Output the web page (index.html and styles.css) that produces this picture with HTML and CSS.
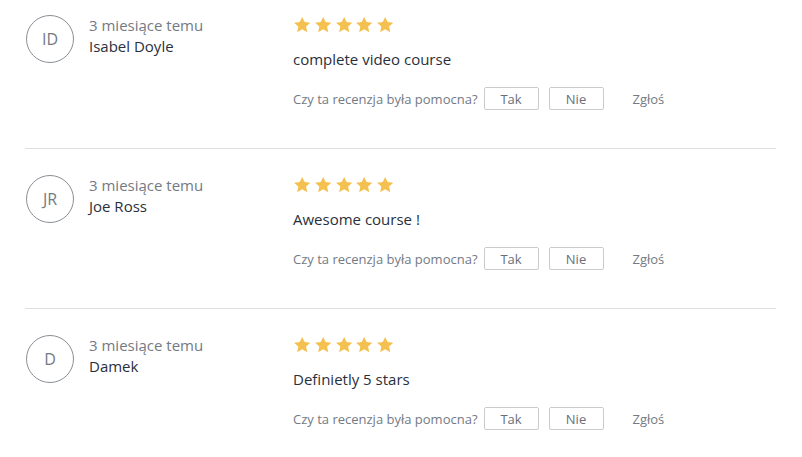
FILE: index.html
```html
<!DOCTYPE html>
<html lang="pl">
<head>
<meta charset="utf-8">
<link rel="stylesheet" href="styles.css">
</head>
<body>
<svg width="0" height="0" style="position:absolute">
  <defs>
    <symbol id="star" viewBox="0 0 24 24">
      <path d="M12 1.2l3.3 6.9 7.5.9-5.6 5.1 1.5 7.5L12 17.8l-6.7 3.8 1.5-7.5L1.2 9l7.5-.9z"/>
    </symbol>
  </defs>
</svg>
<div class="reviews">
  <div class="review">
    <div class="author">
      <div class="avatar">ID</div>
      <div class="meta">
        <div class="time">3 miesiące temu</div>
        <div class="name">Isabel Doyle</div>
      </div>
    </div>
    <div class="body">
      <div class="stars"><svg><use href="#star"/></svg><svg><use href="#star"/></svg><svg><use href="#star"/></svg><svg><use href="#star"/></svg><svg><use href="#star"/></svg></div>
      <div class="comment">complete video course</div>
      <div class="helpful">
        <span class="q">Czy ta recenzja była pomocna?</span>
        <button class="btn">Tak</button>
        <button class="btn">Nie</button>
        <span class="report">Zgłoś</span>
      </div>
    </div>
  </div>
  <div class="review">
    <div class="author">
      <div class="avatar">JR</div>
      <div class="meta">
        <div class="time">3 miesiące temu</div>
        <div class="name">Joe Ross</div>
      </div>
    </div>
    <div class="body">
      <div class="stars"><svg><use href="#star"/></svg><svg><use href="#star"/></svg><svg><use href="#star"/></svg><svg><use href="#star"/></svg><svg><use href="#star"/></svg></div>
      <div class="comment">Awesome course !</div>
      <div class="helpful">
        <span class="q">Czy ta recenzja była pomocna?</span>
        <button class="btn">Tak</button>
        <button class="btn">Nie</button>
        <span class="report">Zgłoś</span>
      </div>
    </div>
  </div>
  <div class="review">
    <div class="author">
      <div class="avatar">D</div>
      <div class="meta">
        <div class="time">3 miesiące temu</div>
        <div class="name">Damek</div>
      </div>
    </div>
    <div class="body">
      <div class="stars"><svg><use href="#star"/></svg><svg><use href="#star"/></svg><svg><use href="#star"/></svg><svg><use href="#star"/></svg><svg><use href="#star"/></svg></div>
      <div class="comment">Definietly 5 stars</div>
      <div class="helpful">
        <span class="q">Czy ta recenzja była pomocna?</span>
        <button class="btn">Tak</button>
        <button class="btn">Nie</button>
        <span class="report">Zgłoś</span>
      </div>
    </div>
  </div>
</div>
</body>
</html>
```
FILE: styles.css
```css
* { box-sizing: border-box; }
html, body { margin: 0; padding: 0; background: #fff; }
body {
  font-family: "Open Sans", "DejaVu Sans", sans-serif;
  color: #29303b;
}
.reviews {
  width: 751px;
  margin-left: 25px;
}
.review {
  display: flex;
  padding: 26px 0 38px;
  border-bottom: 1px solid #dedfe0;
}
.review:first-child { padding-top: 15px; }
.review:last-child { border-bottom: none; }
.author {
  width: 268px;
  display: flex;
  gap: 15px;
  padding-left: 1px;
}
.avatar {
  width: 48px;
  height: 48px;
  border: 1px solid #8a8f96;
  border-radius: 50%;
  display: flex;
  align-items: center;
  justify-content: center;
  font-size: 16px;
  color: #737a84;
  flex: none;
}
.meta { margin-top: -1px; }
.time {
  font-size: 15px;
  line-height: 22px;
  color: #737a84;
}
.name {
  font-size: 15px;
  line-height: 21px;
  color: #29303b;
}
.body { flex: 1; }
.stars {
  display: flex;
  gap: 2.4px;
  height: 18px;
  margin-top: 1px;
}
.stars svg {
  width: 18.4px;
  height: 18px;
  fill: #f4c150;
}
.comment {
  font-size: 15px;
  line-height: 21px;
  margin-top: 15px;
}
.helpful {
  display: flex;
  align-items: center;
  margin-top: 17px;
  font-size: 13px;
  color: #737a84;
}
.q { margin-right: 6px; }
.btn {
  font-family: inherit;
  font-size: 13px;
  color: #686f7a;
  background: #fff;
  border: 1px solid #cacbcc;
  border-radius: 2px;
  width: 55px;
  height: 23px;
  padding: 0;
  margin-right: 10px;
}
.report {
  margin-left: 19px;
  font-size: 13px;
}
```
